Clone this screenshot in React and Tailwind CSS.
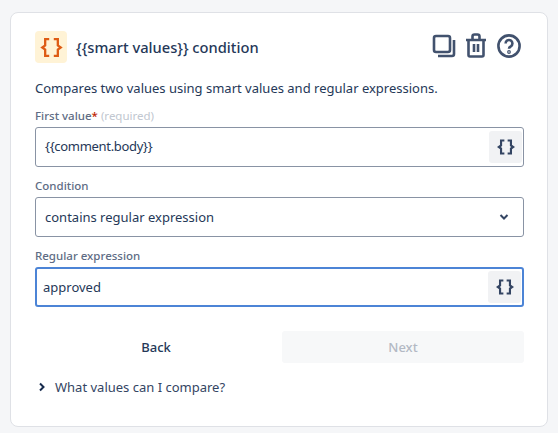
function Braces({ size = 18, color = '#344563', stroke = 1.9 }) {
  return (
    <svg width={size} height={size} viewBox="0 0 16 16" fill="none" stroke={color} strokeWidth={stroke} strokeLinecap="square">
      <path d="M5.6 2.2H3.6v4.4L1.6 8l2 1.4v4.4h2" />
      <path d="M10.4 2.2h2v4.4l2 1.4-2 1.4v4.4h-2" />
    </svg>
  )
}

function BraceButton() {
  return (
    <span className="flex h-8 w-[33px] items-center justify-center rounded-[3px] bg-[#f1f2f4]">
      <Braces />
    </span>
  )
}

function Label({ children }) {
  return <div className="mb-[3px] h-[16px] text-[11.5px] font-medium leading-[16px] text-[#5e6c84]">{children}</div>
}

export default function App() {
  return (
    <div className="h-[433px] w-[558px] overflow-hidden bg-[#f5f6f8] pl-[10px] pt-[12px] text-[#172b4d] [font-family:'Noto_Sans',sans-serif]">
      <div className="h-[415px] w-[538px] rounded-[8px] border border-[#dfe1e6] bg-white pl-[24px] pr-[23px] pt-[18px]">
        <div className="flex h-8 items-center">
          <span className="flex h-8 w-8 items-center justify-center rounded-[4px] bg-[#fff3d6]">
            <Braces size={23} color="#de5b14" stroke={1.6} />
          </span>
          <span className="ml-[9px] pt-[1px] text-[14.7px] font-medium text-[#253858]">{'{{smart values}} condition'}</span>
          <div className="ml-auto mr-[3px] mt-[-3px] flex items-center text-[#42526e]">
            <svg width="24" height="24" viewBox="0 0 24 24" fill="none" stroke="currentColor" strokeWidth="2.6">
              <rect x="2" y="2" width="16" height="16" rx="2" />
              <path d="M22 6v14a2 2 0 0 1-2 2H6" />
            </svg>
            <svg width="22" height="25" viewBox="0 0 22 25" fill="none" stroke="currentColor" strokeWidth="2.6" className="ml-[9px]">
              <path d="M1 7h20M3.5 7v15a1.5 1.5 0 0 0 1.5 1.5h12a1.5 1.5 0 0 0 1.5-1.5V7M7.5 7V3.5a2 2 0 0 1 2-2h3a2 2 0 0 1 2 2V7M9 11v8M13 11v8" />
            </svg>
            <svg width="24" height="24" viewBox="0 0 24 24" fill="none" stroke="currentColor" strokeWidth="2.6" className="ml-[10px]">
              <circle cx="12" cy="12" r="10.6" />
              <path d="M8.6 9.4a3.4 3.4 0 1 1 5.2 2.9c-1.2.7-1.8 1.3-1.8 2.5" />
              <circle cx="12" cy="18" r="0.6" />
            </svg>
          </div>
        </div>

        <p className="mt-[15px] text-[13px] leading-[20px] text-[#253858]">
          Compares two values using smart values and regular expressions.
        </p>

        <div className="mt-[10px]">
          <Label>
            First value<span className="text-[#bf2600]">*</span>{' '}
            <span className="font-normal text-[#c1c7d0]">(required)</span>
          </Label>
          <div className="flex h-10 items-center justify-between rounded-[3px] border border-[#8993a4] pl-[9px] pr-[1px] text-[13px] text-[#253858]">
            <span className="tracking-[-0.3px]">{'{{comment.body}}'}</span>
            <BraceButton />
          </div>
        </div>

        <div className="mt-[11px]">
          <Label>Condition</Label>
          <div className="flex h-10 items-center justify-between rounded-[3px] border border-[#8993a4] pl-[9px] pr-[14px] text-[13px] text-[#253858]">
            <span className="pt-[1px]">contains regular expression</span>
            <svg width="10" height="8" viewBox="0 0 10 8" fill="none" stroke="#344563" strokeWidth="2">
              <path d="M1.5 2 5 5.5 8.5 2" />
            </svg>
          </div>
        </div>

        <div className="mt-[11px]">
          <Label>Regular expression</Label>
          <div className="flex h-10 items-center justify-between rounded-[3px] border-2 border-[#4c84d6] pl-[6px] pr-[1px] text-[13px] text-[#253858]">
            <span className="pt-[1px]">approved</span>
            <BraceButton />
          </div>
        </div>

        <div className="mt-[24px] flex gap-[5px]">
          <button className="h-8 flex-1 rounded-[3px] pt-[1px] text-[13px] font-medium text-[#253858]">Back</button>
          <button className="h-8 flex-1 rounded-[3px] bg-[#f7f8f9] pt-[1px] text-[13px] font-medium text-[#b3b9c4]">Next</button>
        </div>

        <div className="mt-[14px] flex h-5 items-center text-[13px] text-[#344563]">
          <svg width="8" height="10" viewBox="0 0 8 10" fill="none" stroke="#172b4d" strokeWidth="2" className="ml-[3px]">
            <path d="M2 1.5 5.5 5 2 8.5" />
          </svg>
          <span className="ml-[9px] pt-[1px]">What values can I compare?</span>
        </div>
      </div>
    </div>
  )
}
